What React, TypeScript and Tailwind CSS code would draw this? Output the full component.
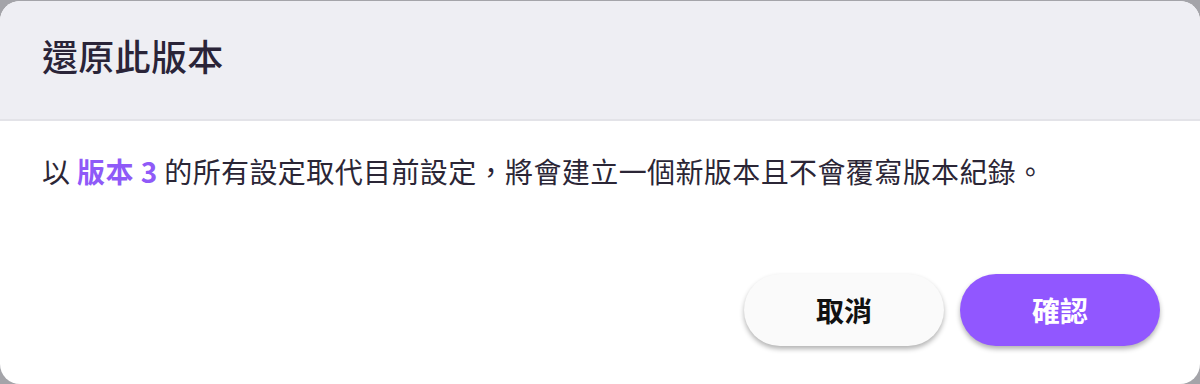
export default function App() {
  return (
    <div className="h-[384px] w-[1200px] bg-[#a4a4a9] pt-px font-['Noto_Sans_CJK_TC','Noto_Sans',sans-serif]">
      <div className="flex h-[383px] flex-col overflow-hidden rounded-[20px] bg-white">
        <div className="flex h-[120px] shrink-0 items-center border-b-2 border-[#e3e3e8] bg-[#eeeef3] px-[42px] pb-[10px]">
          <h2 className="text-[36px] font-medium leading-none tracking-[0.3px] text-[#2a2438]">還原此版本</h2>
        </div>
        <div className="flex-1 px-[42px] pt-[29px]">
          <p className="text-[28px] leading-[42px] tracking-[0.4px] text-[#2b2636]">
            以 <span className="font-semibold text-[#8f5af8]">版本 3</span> 的所有設定取代目前設定，將會建立一個新版本且不會覆寫版本紀錄。
          </p>
        </div>
        <div className="flex justify-end gap-4 px-10 pb-[38px]">
          <button className="flex h-[72px] w-[200px] items-center justify-center rounded-full bg-[#fafafa] text-[28px] font-semibold text-[#111] shadow-[0_3px_5px_rgba(0,0,0,0.3)]">
            取消
          </button>
          <button className="flex h-[72px] w-[200px] items-center justify-center rounded-full bg-[#9157ff] text-[28px] font-semibold text-white shadow-[0_3px_5px_rgba(0,0,0,0.3)]">
            確認
          </button>
        </div>
      </div>
    </div>
  );
}
